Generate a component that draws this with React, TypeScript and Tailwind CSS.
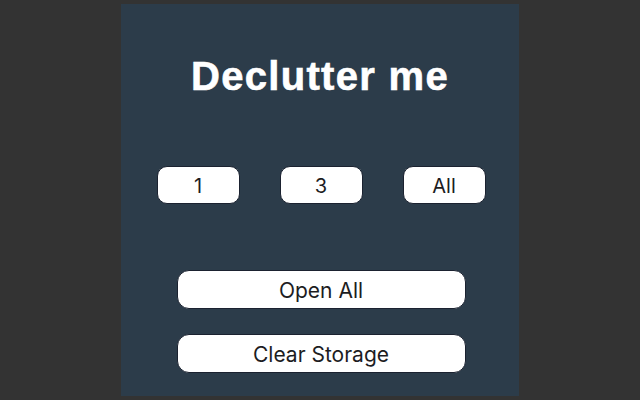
export default function App() {
  const counts = ['1', '3', 'All'];

  return (
    <div className="flex h-[400px] w-[640px] items-center justify-center bg-[#333333]">
      <div className="flex h-[392px] w-[398px] flex-col items-center bg-[#2c3c4a]">
        <h1 className="mt-[52px] font-['Liberation_Sans',Arial,sans-serif] text-[40px] font-bold leading-[40px] tracking-[1.3px] text-white [-webkit-text-stroke:0.6px_white]">
          Declutter me
        </h1>

        <div className="mt-[70px] flex gap-10 pl-[2px]">
          {counts.map((c) => (
            <button
              key={c}
              type="button"
              className="h-[38px] w-[83px] rounded-[10px] border border-[#1b2230] bg-white pt-[2px] font-['Inter',sans-serif] text-[20px] text-[#1d1d1f]"
            >
              {c}
            </button>
          ))}
        </div>

        <div className="mt-[66px] flex flex-col gap-[25px] pl-[2px]">
          <button
            type="button"
            className="h-[39px] w-[289px] rounded-[12px] border border-[#1b2230] bg-white pt-[2px] font-['Inter',sans-serif] text-[21px] text-[#1d1d1f]"
          >
            Open All
          </button>
          <button
            type="button"
            className="h-[39px] w-[289px] rounded-[12px] border border-[#1b2230] bg-white pt-[2px] font-['Inter',sans-serif] text-[21px] text-[#1d1d1f]"
          >
            Clear Storage
          </button>
        </div>
      </div>
    </div>
  );
}
